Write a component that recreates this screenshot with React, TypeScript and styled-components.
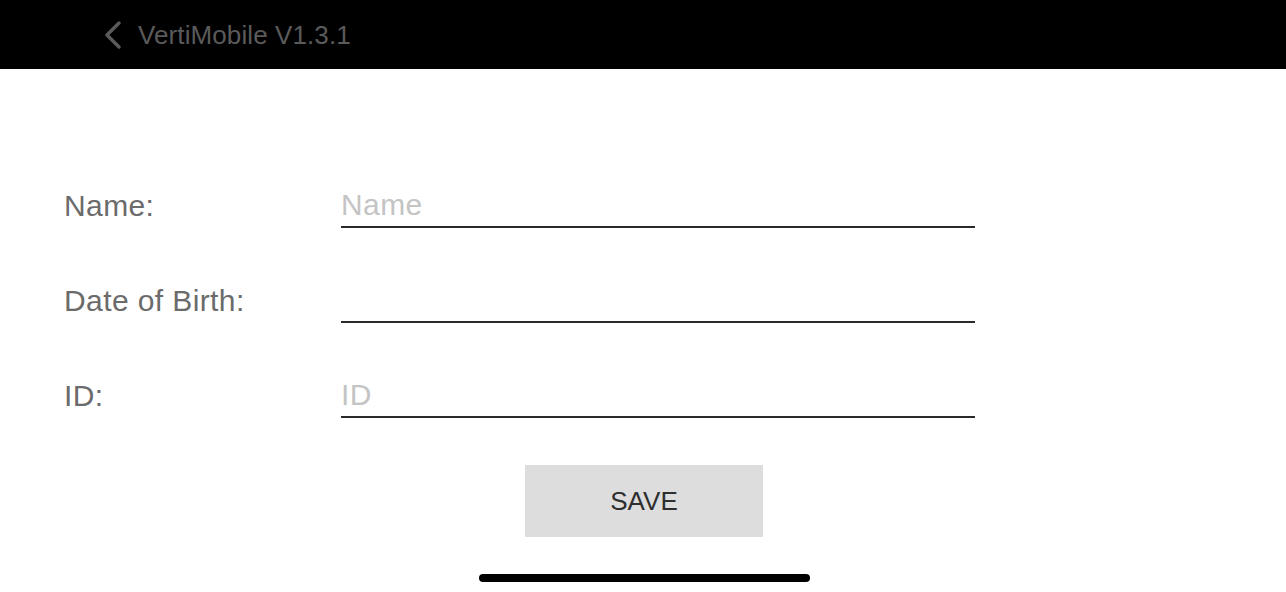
import React from "react";
import styled, { createGlobalStyle } from "styled-components";

const GlobalStyle = createGlobalStyle`
  html, body { margin: 0; padding: 0; background: #fff; }
  body { font-family: "Liberation Sans", Arial, sans-serif; }
  * { box-sizing: border-box; }
`;

const Page = styled.div`
  width: 1286px;
  height: 592px;
  display: flex;
  flex-direction: column;
  background: #fff;
  overflow: hidden;
`;

const Header = styled.header`
  height: 69px;
  background: #000;
  display: flex;
  align-items: center;
  padding-left: 103px;
  gap: 15px;
  flex-shrink: 0;
`;

const BackIcon = styled.svg`
  width: 20px;
  height: 28px;
  display: block;
  margin-top: 1px;
`;

const Title = styled.span`
  font-size: 26px;
  letter-spacing: 0.1px;
  color: #5a5a5a;
  margin-top: 1px;
`;

const Form = styled.main`
  display: flex;
  flex-direction: column;
  padding: 115px 0 0 64px;
  gap: 51px;
`;

const Row = styled.div`
  display: grid;
  grid-template-columns: 277px 634px;
  align-items: center;
  height: 44px;
`;

const Label = styled.label`
  font-size: 30px;
  letter-spacing: 0.4px;
  color: #6b6b6b;
  line-height: 44px;
`;

const Input = styled.input`
  height: 44px;
  width: 100%;
  border: none;
  border-bottom: 2px solid #2a2a2a;
  outline: none;
  padding: 0;
  font-family: "Liberation Sans", Arial, sans-serif;
  font-size: 30px;
  letter-spacing: 0.4px;
  color: #222;
  background: transparent;
  &::placeholder { color: #c4c4c4; }
`;

const ButtonRow = styled.div`
  display: flex;
  justify-content: center;
  margin-top: 47px;
  padding-left: 2px;
`;

const SaveButton = styled.button`
  width: 238px;
  height: 72px;
  border: none;
  background: #dddddd;
  font-family: "Liberation Sans", Arial, sans-serif;
  font-size: 26px;
  color: #2e2e2e;
  padding: 0;
`;

const HomeBar = styled.div`
  display: flex;
  justify-content: center;
  margin-top: 37px;
  padding-left: 3px;
  &::after {
    content: "";
    width: 331px;
    height: 8px;
    border-radius: 4px;
    background: #000;
  }
`;

const fields = [
  { label: "Name:", placeholder: "Name" },
  { label: "Date of Birth:", placeholder: "" },
  { label: "ID:", placeholder: "ID" },
];

export default function App() {
  return (
    <>
      <GlobalStyle />
      <Page>
        <Header>
          <BackIcon viewBox="0 0 20 28" fill="none">
            <path d="M16 2 L4 14 L16 26" stroke="#5a5a5a" strokeWidth="3.4" strokeLinecap="round" strokeLinejoin="round" />
          </BackIcon>
          <Title>VertiMobile V1.3.1</Title>
        </Header>
        <Form>
          {fields.map((f) => (
            <Row key={f.label}>
              <Label>{f.label}</Label>
              <Input placeholder={f.placeholder} />
            </Row>
          ))}
        </Form>
        <ButtonRow>
          <SaveButton>SAVE</SaveButton>
        </ButtonRow>
        <HomeBar />
      </Page>
    </>
  );
}
